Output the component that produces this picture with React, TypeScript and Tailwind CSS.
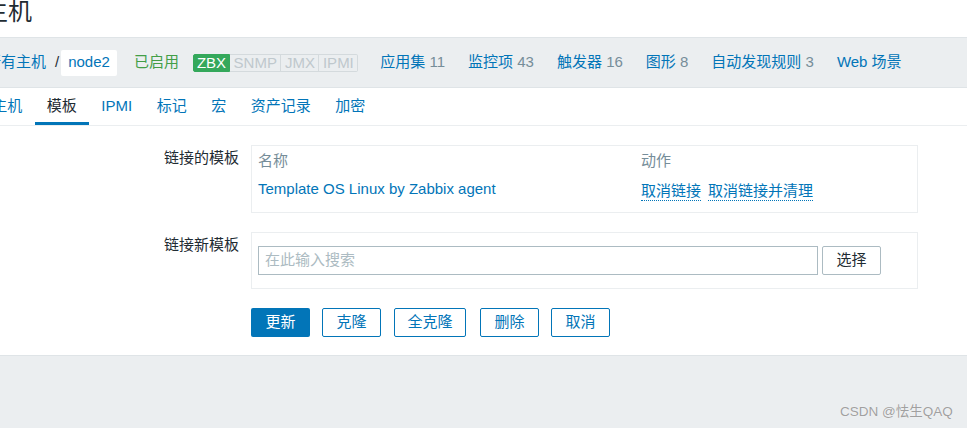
import React from "react";

const navItems: [string, string][] = [
  ["应用集", "11"],
  ["监控项", "43"],
  ["触发器", "16"],
  ["图形", "8"],
  ["自动发现规则", "3"],
  ["Web 场景", ""],
];

const tabs = ["主机", "模板", "IPMI", "标记", "宏", "资产记录", "加密"];

export default function App() {
  return (
    <div className="relative w-[967px] h-[428px] overflow-hidden bg-[#ebeef0] font-['Liberation_Sans','Noto_Sans_CJK_SC',sans-serif] text-[15px] text-[#1f2c33]">
      {/* Title */}
      <div className="h-[37px] bg-white overflow-hidden">
        <h1 className="ml-[-16px] text-[24px] leading-[24px] pt-[0px] font-normal whitespace-nowrap">主机</h1>
      </div>

      {/* Breadcrumb / nav bar */}
      <div className="h-[51px] border-y border-[#dfe4e7] bg-[#ebeef0] flex items-center whitespace-nowrap">
        <div className="ml-[-14px] flex items-center">
          <span className="text-[#0275b8]">所有主机</span>
          <span className="ml-[9px] mr-[2px] text-[#1f2c33]">/</span>
          <span className="h-[26px] px-[7px] bg-white rounded-[2px] flex items-center text-[#0275b8]">node2</span>
          <span className="ml-[17px] text-[#429e47]">已启用</span>
          <div className="ml-[14px] flex items-stretch h-[18px] text-[15px] leading-[16px]">
            <span className="px-[3px] bg-[#34a85b] border border-[#34a85b] text-white rounded-l-[2px]">ZBX</span>
            <span className="px-[3.5px] border-y border-r border-[#d4dadd] text-[#bfc8cd]">SNMP</span>
            <span className="px-[3.5px] border-y border-r border-[#d4dadd] text-[#bfc8cd]">JMX</span>
            <span className="px-[3.5px] border-y border-r border-[#d4dadd] text-[#bfc8cd] rounded-r-[2px]">IPMI</span>
          </div>
          <div className="ml-[22px] flex items-center gap-[23px]">
            {navItems.map(([label, count]) => (
              <span key={label}>
                <span className="text-[#0275b8]">{label}</span>
                {count && <span className="text-[#768d99]"> {count}</span>}
              </span>
            ))}
          </div>
        </div>
      </div>

      {/* Tabs */}
      <div className="bg-white">
        <div className="h-[38px] border-b border-[#ebeef0] flex items-stretch whitespace-nowrap">
          <div className="ml-[-20px] flex items-stretch">
            {tabs.map((t) => (
              <span
                key={t}
                className={
                  t === "模板"
                    ? "px-[12.25px] flex items-center border-b-[3px] border-[#0275b8] pt-[3px] text-[#1f2c33]"
                    : "px-[12.25px] flex items-center text-[#0275b8]"
                }
              >
                {t}
              </span>
            ))}
          </div>
        </div>

        {/* Form */}
        <div className="pt-[19px] pb-[18px] border-b border-[#dfe4e7]">
          <div className="grid grid-cols-[239px_667px] gap-x-[12px] gap-y-[19px]">
            <div className="text-right pt-[2px] leading-[22px]">链接的模板</div>
            <div className="border border-[#ebeef0] px-[6px] pt-[1px] pb-[9px]">
              <div className="grid grid-cols-[383px_1fr] h-[28px] items-center text-[#768d99]">
                <span>名称</span>
                <span>动作</span>
              </div>
              <div className="grid grid-cols-[383px_1fr] h-[28px] items-center">
                <span className="text-[#0275b8]">Template OS Linux by Zabbix agent</span>
                <span className="flex gap-[7px] text-[#0275b8] whitespace-nowrap">
                  <span className="border-b border-dotted border-[#0275b8] leading-[18px] mt-[4px]">取消链接</span>
                  <span className="border-b border-dotted border-[#0275b8] leading-[18px] mt-[4px]">取消链接并清理</span>
                </span>
              </div>
            </div>

            <div className="text-right pt-[2px] leading-[22px]">链接新模板</div>
            <div className="border border-[#ebeef0] px-[6px] py-[13px] flex gap-[4px]">
              <div className="w-[560px] h-[29px] border border-[#acbbc2] flex items-center pl-[6px] text-[#acbbc2]">
                在此输入搜索
              </div>
              <div className="w-[59px] h-[29px] border border-[#acbbc2] rounded-[2px] bg-white flex items-center justify-center text-[#1f2c33]">
                选择
              </div>
            </div>

            <div />
            <div className="flex">
              <span className="w-[59px] h-[29px] rounded-[2px] bg-[#0275b8] text-white flex items-center justify-center">更新</span>
              <span className="ml-[12px] w-[59px] h-[29px] rounded-[2px] border border-[#0275b8] text-[#0275b8] bg-white flex items-center justify-center">克隆</span>
              <span className="ml-[13px] w-[72px] h-[29px] rounded-[2px] border border-[#0275b8] text-[#0275b8] bg-white flex items-center justify-center">全克隆</span>
              <span className="ml-[14px] w-[59px] h-[29px] rounded-[2px] border border-[#0275b8] text-[#0275b8] bg-white flex items-center justify-center">删除</span>
              <span className="ml-[12px] w-[59px] h-[29px] rounded-[2px] border border-[#0275b8] text-[#0275b8] bg-white flex items-center justify-center">取消</span>
            </div>
          </div>
        </div>
      </div>

      {/* Watermark */}
      <div className="absolute left-[840px] top-[403px] text-[13.5px] leading-[18px] text-[#a0a0a0] whitespace-nowrap [text-shadow:0_0_1px_#ffffff]">
        CSDN @怯生QAQ
      </div>
    </div>
  );
}
